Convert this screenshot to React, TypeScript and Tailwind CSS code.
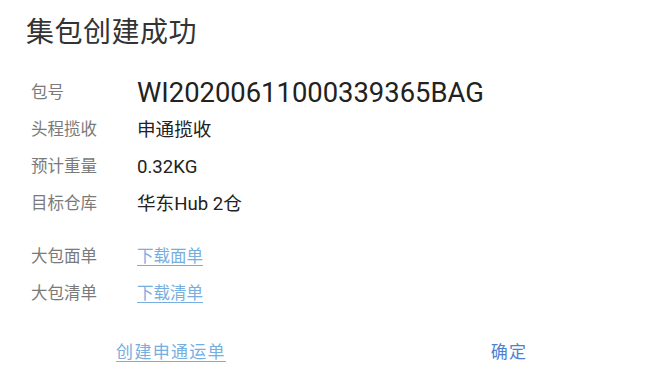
const rows = [
  { label: '头程揽收', value: '申通揽收' },
  { label: '预计重量', value: '0.32KG' },
  { label: '目标仓库', value: '华东Hub 2仓' },
]

const links = [
  { label: '大包面单', text: '下载面单' },
  { label: '大包清单', text: '下载清单' },
]

export default function App() {
  return (
    <div
      className="w-[672px] h-[380px] bg-white overflow-hidden"
      style={{ fontFamily: "Roboto, 'Noto Sans CJK SC', sans-serif" }}
    >
      <div className="pt-4 pl-[26px] text-[28px] leading-[34px] text-[#333333] tracking-[0.5px]">集包创建成功</div>

      <div className="mt-[25px] pl-[31px]">
        <div className="flex items-center h-[37px]">
          <div className="w-[106px] text-[16.5px] text-[#7a7a7a]">包号</div>
          <div className="text-[27.4px] text-[#222222]">WI20200611000339365BAG</div>
        </div>
        {rows.map((r) => (
          <div key={r.label} className="flex items-center h-[37px]">
            <div className="w-[106px] text-[16.5px] text-[#7a7a7a]">{r.label}</div>
            <div className="text-[18.6px] text-[#222222]">{r.value}</div>
          </div>
        ))}

        <div className="mt-4">
          {links.map((l) => (
            <div key={l.label} className="flex items-center h-[37px]">
              <div className="w-[106px] text-[16.5px] text-[#7a7a7a]">{l.label}</div>
              <a className="text-[16.5px] text-[#76aee0] underline underline-offset-[3px] cursor-pointer">
                {l.text}
              </a>
            </div>
          ))}
        </div>
      </div>

      <div className="mt-5 grid grid-cols-[342px_1fr] h-10 items-center">
        <button className="text-[17px] text-[#76aee0] underline underline-offset-[3px] tracking-[1.3px]">
          创建申通运单
        </button>
        <button className="pl-1 text-[17px] text-[#4f80cf] tracking-[1.3px]">确定</button>
      </div>
    </div>
  )
}
